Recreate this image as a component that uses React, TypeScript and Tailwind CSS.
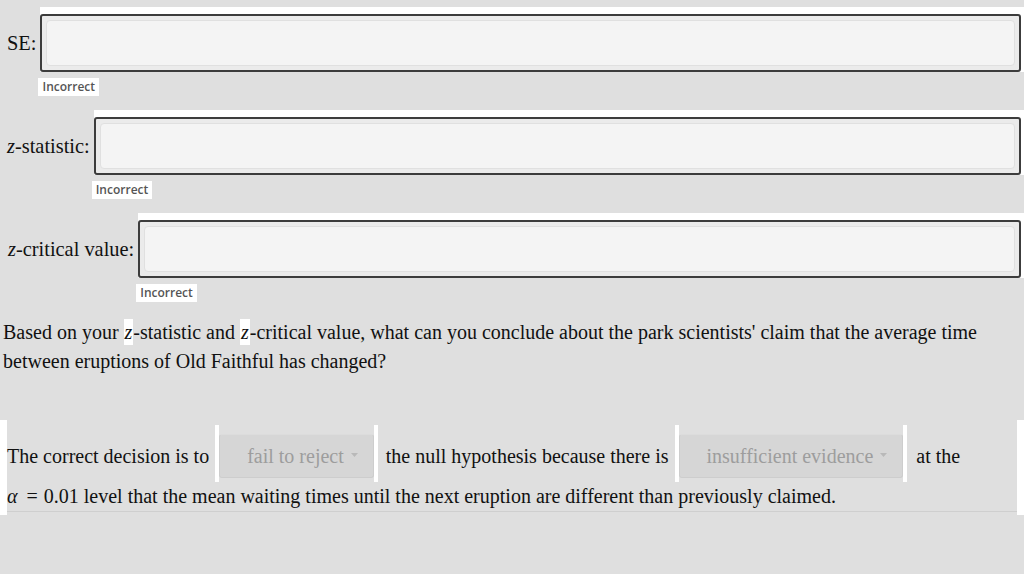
import type { ReactNode } from 'react';

interface AnswerFieldProps {
  label: ReactNode;
}

// Numeric answer box with the "Incorrect" feedback tag underneath
function AnswerField({ label }: AnswerFieldProps) {
  return (
    <div className="flex">
      <div className="flex h-[65px] items-center pl-[7px] pt-[7px] text-[20.4px] leading-none">{label}</div>
      <div className="ml-[4px] flex-1">
        <div className="bg-white pt-[7px] pr-[3px]">
          <div className="flex h-[58px] rounded-[3px] border-2 border-[#3c3c3c] bg-[#ebebeb] p-[4px]">
            <div className="flex-1 rounded-[4px] border border-[#e0e0e0] bg-[#f4f4f4]" />
          </div>
        </div>
        <div className="-ml-[2px] mt-[6px] h-[18px] w-fit bg-white px-[4px] font-['Open_Sans',sans-serif] text-[12px] font-semibold leading-[18px] text-[#555]">
          Incorrect
        </div>
      </div>
    </div>
  );
}

interface DisabledSelectProps {
  value: string;
  className?: string;
}

function DisabledSelect({ value, className = '' }: DisabledSelectProps) {
  return (
    <span
      className={`inline-block h-[57px] border-x-[4px] border-white pt-[9px] pb-[4px] align-baseline ${className}`}
    >
      <span className="flex h-[44px] items-center rounded-[3px] border border-[#cdcdcd] border-t-[#dcdcdc] bg-[#d6d6d6] pl-[27px] pr-[15px] text-[#9d9d9d]">
        {value}
        <svg width="7" height="4" viewBox="0 0 7 4" className="ml-[7px] -mt-[3px]">
          <path d="M0 0h7L3.5 4z" fill="#b9b9b9" />
        </svg>
      </span>
    </span>
  );
}

export default function App() {
  return (
    <div className="h-[574px] w-[1024px] overflow-hidden bg-[#dfdfdf] pt-[7px] font-['Liberation_Serif',serif] text-[#111]">
      <AnswerField label="SE:" />
      <div className="mt-[14px]">
        <AnswerField
          label={
            <>
              <i>z</i>-statistic:
            </>
          }
        />
      </div>
      <div className="mt-[14px]">
        <AnswerField
          label={
            <span className="pl-[1px]">
              <i>z</i>-critical value:
            </span>
          }
        />
      </div>

      {/* Question text */}
      <p className="mt-[16px] pl-[3px] pr-[8px] text-[20px] leading-[29px]">
        Based on your <span className="inline-block h-[26px] bg-white px-[1px] leading-[26px]"><i>z</i></span>
        -statistic and <span className="inline-block h-[26px] bg-white px-[1px] leading-[26px]"><i>z</i></span>
        -critical value, what can you conclude about the park scientists' claim that the average time between
        eruptions of Old Faithful has changed?
      </p>

      {/* Decision sentence with dropdowns */}
      <div className="mt-[44px] border-x-[7px] border-white pt-[5px] pb-[3px]">
        <div className="border-b border-[#cfcfcf] text-[20px] leading-[29px]">
          <div>
            The correct decision is to
            <DisabledSelect value="fail to reject" className="ml-[6px] mr-[8px]" />
            the null hypothesis because there is
            <DisabledSelect value="insufficient evidence" className="ml-[6px] mr-[9px]" />
            at the
          </div>
          <div>
            <i>α</i>
            <span className="ml-[9px] mr-[6px]">=</span>0.01 level that the mean waiting times until the next eruption
            are different than previously claimed.
          </div>
        </div>
      </div>
    </div>
  );
}
